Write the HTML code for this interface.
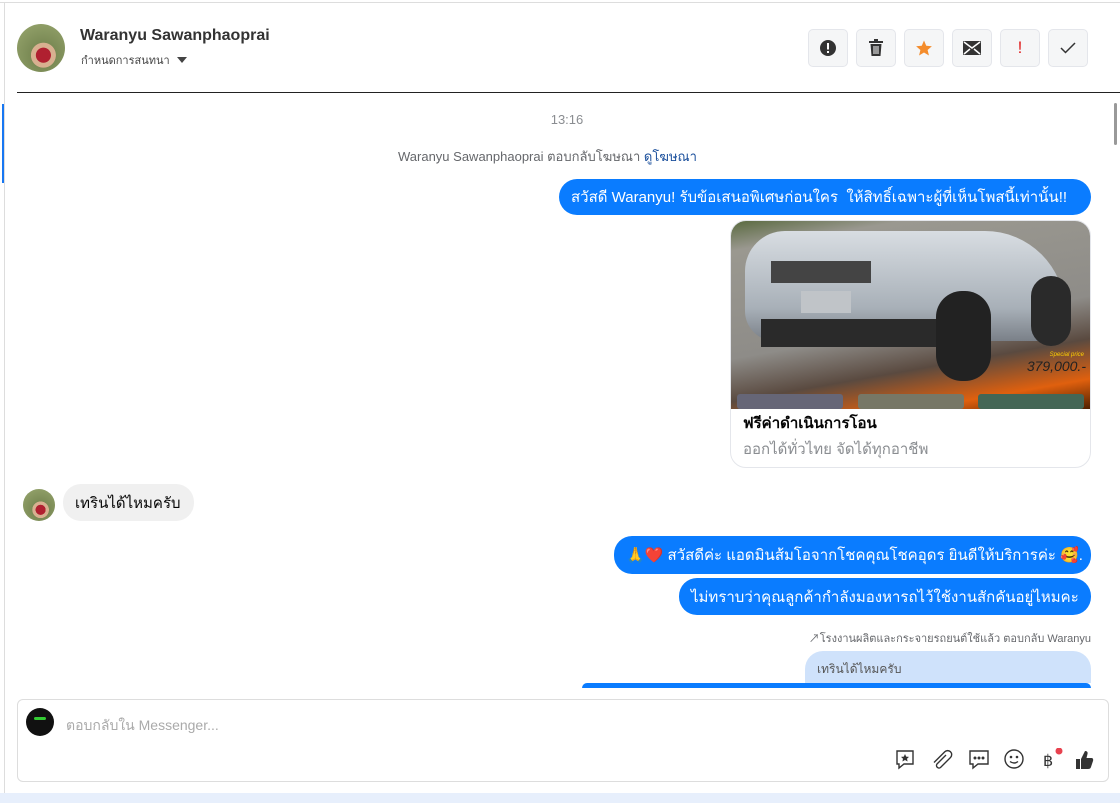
<!DOCTYPE html>
<html><head><meta charset="utf-8"><style>
*{box-sizing:border-box;margin:0;padding:0}
body{width:1120px;height:803px;overflow:hidden;background:#fff;font-family:"Liberation Sans","Noto Sans CJK SC",sans-serif;position:relative;color:#050505}
.abs{position:absolute}
.btn{position:absolute;top:29px;width:40px;height:38px;border:1px solid #e4e6eb;border-radius:5px;background:#f5f6f7;display:flex;align-items:center;justify-content:center}
.blue{position:absolute;background:#0a7cff;color:#fff;font-size:15px;border-radius:18px;padding:0 12px;display:flex;align-items:center;white-space:nowrap}
</style></head><body>
<div class="abs" style="left:0;top:2px;width:1120px;height:1px;background:#ddd"></div>
<div class="abs" style="left:2px;top:104px;width:2px;height:79px;background:#1877f2"></div>
<div class="abs" style="left:1114px;top:103px;width:3px;height:42px;background:#999;border-radius:2px"></div>
<div class="abs" style="left:17px;top:24px;width:48px;height:48px;border-radius:50%;background:radial-gradient(circle at 55% 65%,#b02030 0 18%,#d8b090 19% 30%,#7a8a55 31%,#9aa870)"></div>
<div class="abs" style="left:80px;top:27px;font-size:16px;font-weight:bold;color:#333">Waranyu Sawanphaoprai</div>
<div class="abs" style="left:81px;top:51px;font-size:11px;color:#444">กำหนดการสนทนา <span style="display:inline-block;border:5px solid transparent;border-top:6px solid #444;margin-left:4px;vertical-align:-4px"></span></div>
<div class="btn" style="left:808px"><svg width="18" height="18" viewBox="0 0 18 18"><circle cx="9" cy="9" r="8" fill="#333"/><rect x="8" y="4" width="2" height="6.5" fill="#fff"/><rect x="8" y="12" width="2" height="2" fill="#fff"/></svg></div>
<div class="btn" style="left:856px"><svg width="16" height="18" viewBox="0 0 16 18"><rect x="1" y="2" width="14" height="2" fill="#333"/><rect x="6" y="0" width="4" height="2" fill="#333"/><path d="M2.5 5h11l-1 12h-9z" fill="#333"/><path d="M6 7v8M8 7v8M10 7v8" stroke="#fff" stroke-width="1"/></svg></div>
<div class="btn" style="left:904px"><svg width="18" height="18" viewBox="0 0 24 24"><path d="M12 2l3 7 7.5.6-5.7 5 1.8 7.4L12 18l-6.6 4 1.8-7.4-5.7-5L9 9z" fill="#f48c2c"/></svg></div>
<div class="btn" style="left:952px"><svg width="18" height="14" viewBox="0 0 18 14"><rect width="18" height="14" rx="1" fill="#333"/><path d="M1 1l8 6 8-6M1 13l6-5M17 13l-6-5" stroke="#fff" stroke-width="1.5" fill="none"/></svg></div>
<div class="btn" style="left:1000px;color:#e02020;font-size:17px">!</div>
<div class="btn" style="left:1048px"><svg width="16" height="12" viewBox="0 0 16 12"><path d="M1 6l4.5 4.5L15 1" stroke="#333" stroke-width="1.5" fill="none"/></svg></div>
<div class="abs" style="left:17px;top:92px;width:1103px;height:1px;background:#222"></div>

<div class="abs" style="left:0;width:1120px;top:112px;text-align:center;font-size:13px;color:#8a8d91;padding-left:14px">13:16</div>
<div class="abs" style="left:398px;top:146px;font-size:13px;color:#65676b">Waranyu Sawanphaoprai ตอบกลับโฆษณา <span style="color:#1a4f9c">ดูโฆษณา</span></div>
<div class="blue" style="left:559px;top:179px;width:532px;height:36px">สวัสดี Waranyu! รับข้อเสนอพิเศษก่อนใคร &nbsp;ให้สิทธิ์เฉพาะผู้ที่เห็นโพสนี้เท่านั้น!!</div>
<div class="abs" style="left:730px;top:220px;width:361px;height:248px;border:1px solid #e4e6eb;border-radius:16px;overflow:hidden">
 <div style="height:188px;background:linear-gradient(170deg,#5a6a40 0,#9a9890 12%,#8e8c88 55%,#5a4a40 72%,#e0600e 88%,#502000);position:relative">
  <div style="position:absolute;left:14px;top:10px;width:320px;height:110px;border-radius:40px 80px 20px 30px;background:linear-gradient(#d8dde2,#a8b0b8 70%,#7a8088)"></div>
  <div style="position:absolute;left:40px;top:40px;width:100px;height:22px;background:#444"></div>
  <div style="position:absolute;left:70px;top:70px;width:50px;height:22px;background:#c0c4c8"></div>
  <div style="position:absolute;left:30px;top:98px;width:200px;height:28px;background:#2a2a2a"></div>
  <div style="position:absolute;left:205px;top:70px;width:55px;height:90px;border-radius:26px;background:#222"></div>
  <div style="position:absolute;left:300px;top:55px;width:40px;height:70px;border-radius:20px;background:#2a2a2a"></div>
  <div style="position:absolute;right:6px;top:131px;font-size:6px;color:#ffd000;font-style:italic">Special price</div>
  <div style="position:absolute;right:4px;top:137px;font-size:14px;color:#222;font-style:italic">379,000.-</div>
  <div style="position:absolute;left:6px;top:173px;width:106px;height:15px;background:#667;border-radius:3px"></div>
  <div style="position:absolute;left:127px;top:173px;width:106px;height:15px;background:#776;border-radius:3px"></div>
  <div style="position:absolute;left:247px;top:173px;width:106px;height:15px;background:#465;border-radius:3px"></div>
 </div>
 <div style="padding:2px 12px;font-size:15px;font-weight:bold;color:#050505">ฟรีค่าดำเนินการโอน</div>
 <div style="padding:0 12px;font-size:15px;color:#8a8d91">ออกได้ทั่วไทย จัดได้ทุกอาชีพ</div>
</div>
<div class="abs" style="left:23px;top:489px;width:32px;height:32px;border-radius:50%;background:radial-gradient(circle at 55% 65%,#b02030 0 18%,#d8b090 19% 30%,#7a8a55 31%,#9aa870)"></div>
<div class="abs" style="left:63px;top:484px;width:131px;height:37px;background:#f0f0f0;border-radius:18px;font-size:15px;display:flex;align-items:center;padding-left:12px">เทรินได้ไหมครับ</div>
<div class="blue" style="left:614px;top:536px;width:477px;height:38px">🙏❤️ สวัสดีค่ะ แอดมินส้มโอจากโชคคุณโชคอุดร ยินดีให้บริการค่ะ 🥰.</div>
<div class="blue" style="left:679px;top:578px;width:412px;height:37px">ไม่ทราบว่าคุณลูกค้ากำลังมองหารถไว้ใช้งานสักคันอยู่ไหมคะ</div>
<div class="abs" style="right:29px;top:629px;font-size:11px;color:#65676b">↗โรงงานผลิตและกระจายรถยนต์ใช้แล้ว ตอบกลับ Waranyu</div>
<div class="abs" style="left:582px;top:683px;width:509px;height:5px;background:#0a7cff;border-radius:18px 18px 0 0"></div>
<div class="abs" style="left:805px;top:651px;width:286px;height:32px;background:#cfe2fb;border-radius:18px 18px 0 0;font-size:12px;color:#555;padding:9px 0 0 12px">เทรินได้ไหมครับ</div>
<div class="abs" style="left:5px;top:688px;width:1107px;height:105px;background:#fff"></div>
<div class="abs" style="left:4px;top:2px;width:1px;height:791px;background:#ddd"></div>
<div class="abs" style="left:17px;top:699px;width:1092px;height:83px;border:1px solid #ddd;border-radius:6px"></div>
<div class="abs" style="left:26px;top:708px;width:28px;height:28px;border-radius:50%;background:#111"><div style="margin:9px auto 0;width:12px;height:3px;background:#3c3;border-radius:2px"></div></div>
<div class="abs" style="left:66px;top:715px;font-size:14px;color:#aaa">ตอบกลับใน Messenger...</div>
<svg class="abs" style="left:894px;top:748px" width="210" height="24" viewBox="0 0 210 24" fill="none" stroke="#333" stroke-width="1.4">
<path d="M3 3h16v13H10l-5 4v-4H3z"/><path d="M11 6l1.2 2.6 2.8.3-2 1.8.6 2.8-2.6-1.5-2.6 1.5.6-2.8-2-1.8 2.8-.3z" fill="#333" stroke="none"/>
<path d="M52 7l-9 9a2.5 2.5 0 0 0 3.5 3.5l10-10a4 4 0 0 0-5.7-5.7L40 14.5"/>
<path d="M76 3h18v13H84l-5 4v-4h-3z"/><circle cx="81" cy="10" r=".8" fill="#333"/><circle cx="85" cy="10" r=".8" fill="#333"/><circle cx="89" cy="10" r=".8" fill="#333"/>
<circle cx="120" cy="11" r="9"/><circle cx="117" cy="9" r=".6" fill="#333"/><circle cx="123" cy="9" r=".6" fill="#333"/><path d="M116 13.5q4 3 8 0"/>
<text x="149" y="18" font-size="16" fill="#333" stroke="none" font-family="Liberation Sans">฿</text>
<circle cx="165" cy="3" r="3.5" fill="#e8424f" stroke="none"/>
<path d="M182 11h4v10h-4zM187 11l4-8c2 0 3 1 2.5 3l-1 4h5c1.5 0 2 1.5 1.5 3l-2 6c-.5 1.5-1.5 2-3 2h-7z" fill="#333" stroke="none"/>
</svg>
<div class="abs" style="left:0;top:793px;width:1120px;height:10px;background:#e7effc"></div>
</body></html>
